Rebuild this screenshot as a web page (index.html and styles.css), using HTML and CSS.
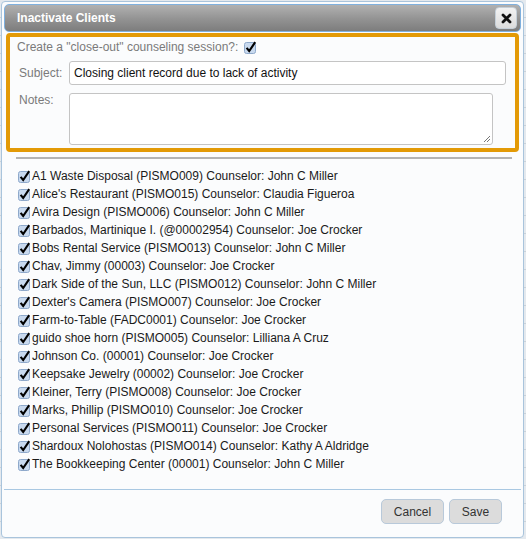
FILE: index.html
```html
<!DOCTYPE html>
<html>
<head>
<meta charset="utf-8">
<link rel="stylesheet" href="styles.css">
</head>
<body>
<div class="dialog">
  <div class="titlebar">
    <span class="title">Inactivate Clients</span>
    <span class="close"><svg width="11" height="11" viewBox="0 0 11 11"><path d="M2 2 L9 9 M9 2 L2 9" stroke="#111" stroke-width="2.8" stroke-linecap="round"/></svg></span>
  </div>
  <div class="session">
    <div class="create-row">
      <span>Create a "close-out" counseling session?:</span>
      <svg class="cb" width="13" height="13" viewBox="0 0 13 13"><rect x="0.5" y="1.5" width="11" height="11" rx="2" fill="#c8d9ee" stroke="#8ea9cb"/><path d="M2.6 6.8 L5.2 10 L11.2 1.2" stroke="#000" stroke-width="2.1" fill="none"/></svg>
    </div>
    <div class="field-row">
      <label class="lbl">Subject:</label>
      <div class="input">Closing client record due to lack of activity</div>
    </div>
    <div class="field-row notes-row">
      <label class="lbl">Notes:</label>
      <div class="textarea"><svg class="grip" width="8" height="8" viewBox="0 0 8 8"><path d="M7 1 L1 7 M7 4 L4 7" stroke="#777" stroke-width="1"/></svg></div>
    </div>
  </div>
  <div class="sep"></div>
  <ul class="clients">
    <li><svg class="cb" width="13" height="13" viewBox="0 0 13 13"><rect x="0.5" y="1.5" width="11" height="11" rx="2" fill="#c8d9ee" stroke="#8ea9cb"/><path d="M2.6 6.8 L5.2 10 L11.2 1.2" stroke="#000" stroke-width="2.1" fill="none"/></svg>A1 Waste Disposal (PISMO009) Counselor: John C Miller</li>
    <li><svg class="cb" width="13" height="13" viewBox="0 0 13 13"><rect x="0.5" y="1.5" width="11" height="11" rx="2" fill="#c8d9ee" stroke="#8ea9cb"/><path d="M2.6 6.8 L5.2 10 L11.2 1.2" stroke="#000" stroke-width="2.1" fill="none"/></svg>Alice's Restaurant (PISMO015) Counselor: Claudia Figueroa</li>
    <li><svg class="cb" width="13" height="13" viewBox="0 0 13 13"><rect x="0.5" y="1.5" width="11" height="11" rx="2" fill="#c8d9ee" stroke="#8ea9cb"/><path d="M2.6 6.8 L5.2 10 L11.2 1.2" stroke="#000" stroke-width="2.1" fill="none"/></svg>Avira Design (PISMO006) Counselor: John C Miller</li>
    <li><svg class="cb" width="13" height="13" viewBox="0 0 13 13"><rect x="0.5" y="1.5" width="11" height="11" rx="2" fill="#c8d9ee" stroke="#8ea9cb"/><path d="M2.6 6.8 L5.2 10 L11.2 1.2" stroke="#000" stroke-width="2.1" fill="none"/></svg>Barbados, Martinique I. (@00002954) Counselor: Joe Crocker</li>
    <li><svg class="cb" width="13" height="13" viewBox="0 0 13 13"><rect x="0.5" y="1.5" width="11" height="11" rx="2" fill="#c8d9ee" stroke="#8ea9cb"/><path d="M2.6 6.8 L5.2 10 L11.2 1.2" stroke="#000" stroke-width="2.1" fill="none"/></svg>Bobs Rental Service (PISMO013) Counselor: John C Miller</li>
    <li><svg class="cb" width="13" height="13" viewBox="0 0 13 13"><rect x="0.5" y="1.5" width="11" height="11" rx="2" fill="#c8d9ee" stroke="#8ea9cb"/><path d="M2.6 6.8 L5.2 10 L11.2 1.2" stroke="#000" stroke-width="2.1" fill="none"/></svg>Chav, Jimmy (00003) Counselor: Joe Crocker</li>
    <li><svg class="cb" width="13" height="13" viewBox="0 0 13 13"><rect x="0.5" y="1.5" width="11" height="11" rx="2" fill="#c8d9ee" stroke="#8ea9cb"/><path d="M2.6 6.8 L5.2 10 L11.2 1.2" stroke="#000" stroke-width="2.1" fill="none"/></svg>Dark Side of the Sun, LLC (PISMO012) Counselor: John C Miller</li>
    <li><svg class="cb" width="13" height="13" viewBox="0 0 13 13"><rect x="0.5" y="1.5" width="11" height="11" rx="2" fill="#c8d9ee" stroke="#8ea9cb"/><path d="M2.6 6.8 L5.2 10 L11.2 1.2" stroke="#000" stroke-width="2.1" fill="none"/></svg>Dexter's Camera (PISMO007) Counselor: Joe Crocker</li>
    <li><svg class="cb" width="13" height="13" viewBox="0 0 13 13"><rect x="0.5" y="1.5" width="11" height="11" rx="2" fill="#c8d9ee" stroke="#8ea9cb"/><path d="M2.6 6.8 L5.2 10 L11.2 1.2" stroke="#000" stroke-width="2.1" fill="none"/></svg>Farm-to-Table (FADC0001) Counselor: Joe Crocker</li>
    <li><svg class="cb" width="13" height="13" viewBox="0 0 13 13"><rect x="0.5" y="1.5" width="11" height="11" rx="2" fill="#c8d9ee" stroke="#8ea9cb"/><path d="M2.6 6.8 L5.2 10 L11.2 1.2" stroke="#000" stroke-width="2.1" fill="none"/></svg>guido shoe horn (PISMO005) Counselor: Lilliana A Cruz</li>
    <li><svg class="cb" width="13" height="13" viewBox="0 0 13 13"><rect x="0.5" y="1.5" width="11" height="11" rx="2" fill="#c8d9ee" stroke="#8ea9cb"/><path d="M2.6 6.8 L5.2 10 L11.2 1.2" stroke="#000" stroke-width="2.1" fill="none"/></svg>Johnson Co. (00001) Counselor: Joe Crocker</li>
    <li><svg class="cb" width="13" height="13" viewBox="0 0 13 13"><rect x="0.5" y="1.5" width="11" height="11" rx="2" fill="#c8d9ee" stroke="#8ea9cb"/><path d="M2.6 6.8 L5.2 10 L11.2 1.2" stroke="#000" stroke-width="2.1" fill="none"/></svg>Keepsake Jewelry (00002) Counselor: Joe Crocker</li>
    <li><svg class="cb" width="13" height="13" viewBox="0 0 13 13"><rect x="0.5" y="1.5" width="11" height="11" rx="2" fill="#c8d9ee" stroke="#8ea9cb"/><path d="M2.6 6.8 L5.2 10 L11.2 1.2" stroke="#000" stroke-width="2.1" fill="none"/></svg>Kleiner, Terry (PISMO008) Counselor: Joe Crocker</li>
    <li><svg class="cb" width="13" height="13" viewBox="0 0 13 13"><rect x="0.5" y="1.5" width="11" height="11" rx="2" fill="#c8d9ee" stroke="#8ea9cb"/><path d="M2.6 6.8 L5.2 10 L11.2 1.2" stroke="#000" stroke-width="2.1" fill="none"/></svg>Marks, Phillip (PISMO010) Counselor: Joe Crocker</li>
    <li><svg class="cb" width="13" height="13" viewBox="0 0 13 13"><rect x="0.5" y="1.5" width="11" height="11" rx="2" fill="#c8d9ee" stroke="#8ea9cb"/><path d="M2.6 6.8 L5.2 10 L11.2 1.2" stroke="#000" stroke-width="2.1" fill="none"/></svg>Personal Services (PISMO011) Counselor: Joe Crocker</li>
    <li><svg class="cb" width="13" height="13" viewBox="0 0 13 13"><rect x="0.5" y="1.5" width="11" height="11" rx="2" fill="#c8d9ee" stroke="#8ea9cb"/><path d="M2.6 6.8 L5.2 10 L11.2 1.2" stroke="#000" stroke-width="2.1" fill="none"/></svg>Shardoux Nolohostas (PISMO014) Counselor: Kathy A Aldridge</li>
    <li><svg class="cb" width="13" height="13" viewBox="0 0 13 13"><rect x="0.5" y="1.5" width="11" height="11" rx="2" fill="#c8d9ee" stroke="#8ea9cb"/><path d="M2.6 6.8 L5.2 10 L11.2 1.2" stroke="#000" stroke-width="2.1" fill="none"/></svg>The Bookkeeping Center (00001) Counselor: John C Miller</li>
  </ul>
  <div class="footer">
    <button class="btn cancel">Cancel</button>
    <button class="btn save">Save</button>
  </div>
</div>
</body>
</html>
```
FILE: styles.css
```css
html, body {
  margin: 0;
  padding: 0;
}
body {
  width: 526px;
  height: 539px;
  overflow: hidden;
  font-family: "Liberation Sans", Arial, sans-serif;
  font-size: 12px;
  color: #222;
  background-color: #e4e9ee;
  background-image: repeating-linear-gradient(to bottom, transparent 0, transparent 17px, #c9d2da 17px, #c9d2da 18px);
}
.dialog {
  box-sizing: border-box;
  margin: 1px 0 0 1px;
  width: 523px;
  height: 537px;
  border: 1px solid #a9c4dc;
  border-radius: 4px;
  background: #fbfcfd;
  padding: 2px;
  display: flex;
  flex-direction: column;
}
.titlebar {
  box-sizing: border-box;
  height: 28px;
  border: 1px solid #7fb0de;
  border-radius: 5px;
  background: linear-gradient(to bottom, #b1b1b1 0%, #929292 55%, #7d7d7d 100%);
  display: flex;
  align-items: center;
  justify-content: space-between;
  padding: 0 3px 0 12px;
}
.title {
  color: #fff;
  font-weight: bold;
  font-size: 12px;
}
.close {
  box-sizing: border-box;
  width: 22px;
  height: 22px;
  border: 1px solid #c5cfd8;
  border-radius: 4px;
  background: linear-gradient(to bottom, #f2f2f2, #dcdcdc);
  display: flex;
  align-items: center;
  justify-content: center;
}
.session {
  margin: 1px 2px 0 2px;
  height: 119px;
  box-sizing: border-box;
  border: 4px solid #e39a06;
  border-radius: 4px;
  background: #fbfcfd;
  padding: 1px 7px 0 7px;
}
.create-row {
  display: flex;
  align-items: center;
  height: 18px;
  color: #7a7a7a;
}
.create-row .cb {
  margin-left: 6px;
}
.field-row {
  display: flex;
  align-items: center;
  padding-left: 2px;
  margin-top: 5px;
}
.lbl {
  width: 50px;
  color: #7a7a7a;
}
.input {
  box-sizing: border-box;
  width: 437px;
  height: 24px;
  border: 1px solid #c4c4c4;
  border-radius: 3px;
  background: #fff;
  padding: 0 4px;
  line-height: 22px;
  color: #111;
}
.notes-row {
  align-items: flex-start;
  margin-top: 8px;
}
.textarea {
  box-sizing: border-box;
  width: 424px;
  height: 52px;
  border: 1px solid #c4c4c4;
  border-radius: 3px;
  background: #fff;
  position: relative;
}
.grip {
  position: absolute;
  right: 1px;
  bottom: 1px;
}
.sep {
  margin: 5px 9px 0 12px;
  height: 2px;
  background: #b4b4b4;
}
.clients {
  list-style: none;
  margin: 8px 0 0 0;
  padding: 0 0 0 14px;
  flex: none;
}
.clients li {
  height: 18px;
  display: flex;
  align-items: center;
  color: #1a1a1a;
}
.clients .cb {
  margin-right: 1px;
  flex: none;
}
.footer {
  margin-top: auto;
  border-top: 1px solid #a9c8e2;
  display: flex;
  justify-content: flex-end;
  gap: 5px;
  padding: 9px 19px 11px 0;
}
.btn {
  box-sizing: border-box;
  height: 25px;
  border: 1px solid #b8c9da;
  border-radius: 5px;
  background: #dcdcdc;
  font-family: "Liberation Sans", Arial, sans-serif;
  font-size: 12px;
  color: #333;
  padding: 0;
}
.cancel { width: 63px; }
.save { width: 53px; }
```
